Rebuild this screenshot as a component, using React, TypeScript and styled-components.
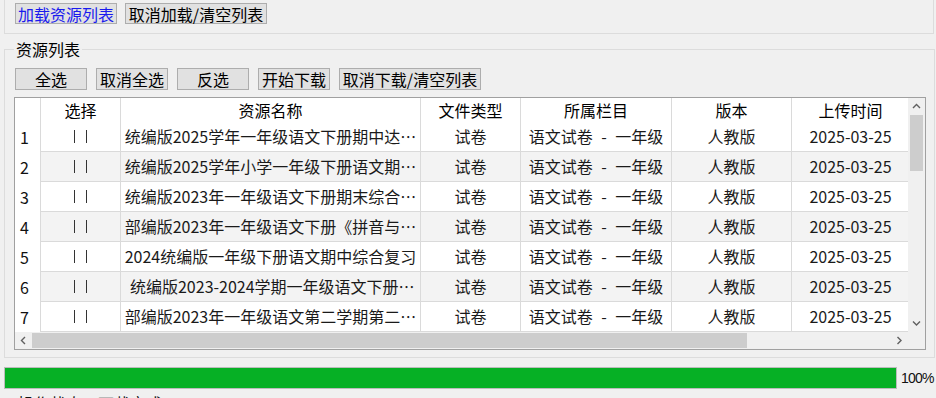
import React from "react";
import styled, { createGlobalStyle } from "styled-components";

const GlobalStyle = createGlobalStyle`
  html, body { margin: 0; padding: 0; background: #f0f0f0; }
  body {
    font-family: "Noto Sans CJK SC", "Microsoft YaHei", sans-serif;
    font-size: 16px;
    color: #000;
    overflow: hidden;
  }
  * { box-sizing: border-box; }
`;

const Page = styled.div`
  width: 936px;
  height: 398px;
  overflow: hidden;
  display: flex;
  flex-direction: column;
`;

const TopFrame = styled.div`
  margin: 0 2px 0 4px;
  border: 1px solid #dcdcdc;
  border-top: none;
  padding: 3px 10px 9px;
  display: flex;
  gap: 8px;
`;

const Button = styled.button<{ $w: number; $h?: number; $blue?: boolean }>`
  width: ${(p) => p.$w}px;
  height: ${(p) => p.$h ?? 22}px;
  padding: 0;
  margin: 0;
  background: #e1e1e1;
  border: 1px solid #adadad;
  border-radius: 0;
  font-family: inherit;
  font-size: 16px;
  line-height: 18px;
  color: ${(p) => (p.$blue ? "#1a1aee" : "#000")};
  text-align: center;
  white-space: nowrap;
  flex: none;
`;

const Group = styled.fieldset`
  margin: 6px 1px 0 4px;
  border: 1px solid #dcdcdc;
  padding: 10px 8px 7px 9px;
  min-inline-size: 0;
`;

const Legend = styled.legend`
  padding: 0 2px;
  margin: 0;
  font-size: 16px;
  line-height: 18px;
`;

const ButtonRow = styled.div`
  display: flex;
  gap: 9px;
  margin: 0 0 7px 1px;
`;

const Table = styled.div`
  width: 912px;
  height: 253px;
  border: 1px solid #a0a0a0;
  background: #fff;
  display: grid;
  grid-template-columns: 893px 17px;
  grid-template-rows: 234px 17px;
`;

const Viewport = styled.div`
  overflow: hidden;
  background: #fff;
`;

const COLS = "26px 80px 300px 100px 151px 120px 118px";

const HeaderRow = styled.div`
  display: grid;
  grid-template-columns: ${COLS};
  height: 24px;
  width: max-content;
`;

const HeaderCell = styled.div`
  border-right: 1px solid #dadada;
  text-align: center;
  line-height: 24px;
  white-space: nowrap;
  overflow: hidden;
`;

const DataRow = styled.div<{ $alt: boolean }>`
  display: grid;
  grid-template-columns: ${COLS};
  height: 30px;
  width: max-content;
  background: ${(p) => (p.$alt ? "#f3f3f3" : "#fff")};
`;

const RowHead = styled.div`
  background: #fff;
  border-right: 1px solid #dadada;
  padding-left: 5px;
  line-height: 30px;
  color: #111;
`;

const Cell = styled.div<{ $spaced?: boolean }>`
  border-right: 1px solid #dadada;
  border-bottom: 1px solid #dadada;
  text-align: center;
  line-height: 29px;
  white-space: nowrap;
  overflow: hidden;
  color: #1a1a1a;
  word-spacing: ${(p) => (p.$spaced ? "5px" : "normal")};
`;

const CheckCell = styled(Cell)`
  display: flex;
  align-items: center;
  justify-content: center;
`;

const CheckMark = styled.span`
  display: block;
  width: 13px;
  height: 13px;
  border-left: 1px solid #333;
  border-right: 1px solid #333;
`;

const VScroll = styled.div`
  display: flex;
  flex-direction: column;
  background: #f0f0f0;
`;

const HScroll = styled.div`
  display: flex;
  background: #f0f0f0;
`;

const ArrowBox = styled.div`
  width: 17px;
  height: 17px;
  flex: none;
  display: flex;
  align-items: center;
  justify-content: center;
`;

const VTrack = styled.div`
  flex: 1;
  padding: 0 2px;
`;

const VThumb = styled.div`
  height: 56px;
  background: #cdcdcd;
`;

const HTrack = styled.div`
  flex: 1;
  padding: 1px 0;
`;

const HThumb = styled.div`
  height: 100%;
  background: #cdcdcd;
`;

const Corner = styled.div`
  background: #f0f0f0;
`;

const ProgressRow = styled.div`
  display: flex;
  align-items: center;
  margin: 9px 0 0 4px;
`;

const ProgressTrack = styled.div`
  width: 893px;
  height: 22px;
  border: 1px solid #bcbcbc;
  background: #e6e6e6;
`;

const ProgressFill = styled.div`
  height: 100%;
  background: #06b025;
`;

const Percent = styled.span`
  margin-left: 4px;
  font-family: "Liberation Sans", Arial, sans-serif;
  font-size: 14px;
  letter-spacing: -0.8px;
  color: #111;
`;

const Status = styled.div`
  margin: 5px 0 0 18px;
  line-height: 18px;
  font-size: 16px;
  color: #111;
`;

type Dir = "up" | "down" | "left" | "right";
const Chevron: React.FC<{ dir: Dir }> = ({ dir }) => {
  const pts: Record<Dir, string> = {
    up: "1,6 4.5,2.5 8,6",
    down: "1,2.5 4.5,6 8,2.5",
    left: "6,1 2.5,4.5 6,8",
    right: "2.5,1 6,4.5 2.5,8",
  };
  return (
    <svg width="9" height="9" viewBox="0 0 9 9">
      <polyline points={pts[dir]} fill="none" stroke="#606060" strokeWidth="1.4" />
    </svg>
  );
};

const headers = ["", "选择", "资源名称", "文件类型", "所属栏目", "版本", "上传时间"];

const titles = [
  "统编版2025学年一年级语文下册期中达…",
  "统编版2025学年小学一年级下册语文期…",
  "统编版2023年一年级语文下册期末综合…",
  "部编版2023年一年级语文下册《拼音与…",
  "2024统编版一年级下册语文期中综合复习",
  "\u00a0统编版2023-2024学期一年级语文下册…",
  "部编版2023年一年级语文第二学期第二…",
];

export default function App() {
  const progress = 100;
  return (
    <>
      <GlobalStyle />
      <Page>
        <TopFrame>
          <Button $w={102} $h={21} $blue>加载资源列表</Button>
          <Button $w={142} $h={21}>取消加载/清空列表</Button>
        </TopFrame>
        <Group>
          <Legend>资源列表</Legend>
          <ButtonRow>
            <Button $w={72}>全选</Button>
            <Button $w={72}>取消全选</Button>
            <Button $w={72}>反选</Button>
            <Button $w={72}>开始下载</Button>
            <Button $w={142}>取消下载/清空列表</Button>
          </ButtonRow>
          <Table>
            <Viewport>
              <HeaderRow>
                {headers.map((h, i) => (
                  <HeaderCell key={i}>{h}</HeaderCell>
                ))}
              </HeaderRow>
              {titles.map((t, i) => (
                <DataRow key={i} $alt={i % 2 === 1}>
                  <RowHead>{i + 1}</RowHead>
                  <CheckCell>
                    <CheckMark />
                  </CheckCell>
                  <Cell>{t}</Cell>
                  <Cell>试卷</Cell>
                  <Cell $spaced>语文试卷 - 一年级</Cell>
                  <Cell>人教版</Cell>
                  <Cell>2025-03-25</Cell>
                </DataRow>
              ))}
            </Viewport>
            <VScroll>
              <ArrowBox><Chevron dir="up" /></ArrowBox>
              <VTrack><VThumb /></VTrack>
              <ArrowBox><Chevron dir="down" /></ArrowBox>
            </VScroll>
            <HScroll>
              <ArrowBox><Chevron dir="left" /></ArrowBox>
              <HTrack><HThumb style={{ width: "715px" }} /></HTrack>
              <ArrowBox><Chevron dir="right" /></ArrowBox>
            </HScroll>
            <Corner />
          </Table>
        </Group>
        <ProgressRow>
          <ProgressTrack>
            <ProgressFill style={{ width: `${progress}%` }} />
          </ProgressTrack>
          <Percent>{progress}%</Percent>
        </ProgressRow>
        <Status>操作状态：下载完成</Status>
      </Page>
    </>
  );
}
